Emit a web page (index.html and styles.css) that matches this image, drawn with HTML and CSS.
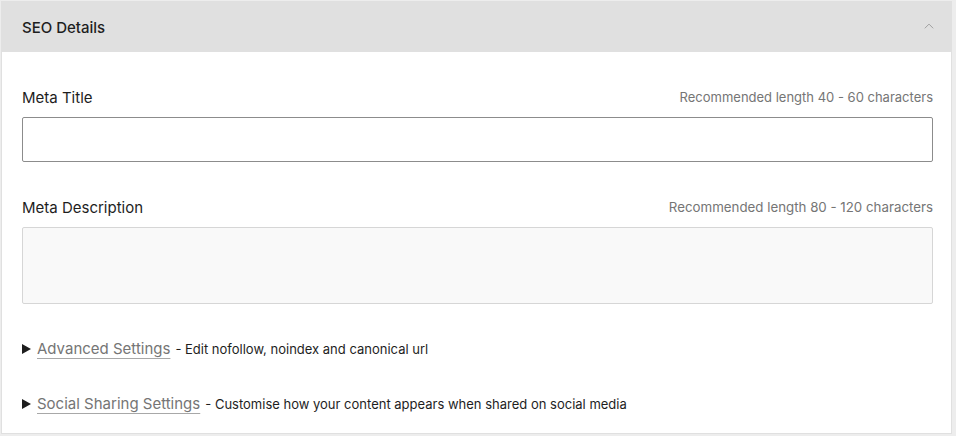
FILE: index.html
```html
<!DOCTYPE html>
<html>
<head>
<meta charset="utf-8">
<link rel="stylesheet" href="styles.css">
</head>
<body>
<section class="panel">
  <header class="panel-head">
    <h2 class="panel-title">SEO Details</h2>
    <svg class="chev" width="10" height="6" viewBox="0 0 10 6"><path d="M0.8 5.3 L5 1.1 L9.2 5.3" fill="none" stroke="#a0a0a0" stroke-width="1"/></svg>
  </header>
  <div class="panel-body">
    <div class="field">
      <div class="field-head">
        <label class="field-label">Meta Title</label>
        <span class="hint">Recommended length 40 - 60 characters</span>
      </div>
      <input class="input" type="text">
    </div>
    <div class="field">
      <div class="field-head">
        <label class="field-label">Meta Description</label>
        <span class="hint">Recommended length 80 - 120 characters</span>
      </div>
      <textarea class="textarea"></textarea>
    </div>
    <div class="toggle">
      <span class="tri"></span>
      <a class="toggle-link">Advanced Settings</a>
      <span class="toggle-desc">- Edit nofollow, noindex and canonical url</span>
    </div>
    <div class="toggle">
      <span class="tri"></span>
      <a class="toggle-link">Social Sharing Settings</a>
      <span class="toggle-desc">- Customise how your content appears when shared on social media</span>
    </div>
  </div>
</section>
</body>
</html>
```

FILE: styles.css
```css
html, body {
  margin: 0;
  padding: 0;
}
body {
  background: #ededed;
  font-family: Inter, "Noto Sans", sans-serif;
  color: #1e1e1e;
  width: 956px;
  height: 436px;
  overflow: hidden;
}
.panel {
  margin: 1px 0 0 1px;
  width: 949px;
  height: 431px;
  border: 1px solid #e0e0e0;
  background: #fff;
  box-sizing: content-box;
}
.panel-head {
  height: 50px;
  background: #e0e0e0;
  display: flex;
  align-items: center;
  justify-content: space-between;
  padding: 0 17px 0 20px;
}
.panel-title {
  margin: 0;
  font-size: 15px;
  font-weight: 500;
  color: #1e1e1e;
}
.chev {
  display: block;
  margin-top: -2px;
}
.panel-body {
  padding: 35px 18px 0 20px;
}
.field {
  margin-bottom: 35px;
}
.field-head {
  display: flex;
  justify-content: space-between;
  align-items: center;
  height: 20px;
  margin-bottom: 10px;
}
.field-label {
  font-size: 15px;
  color: #1e1e1e;
}
.hint {
  font-size: 13px;
  color: #757575;
}
.field:nth-child(2) .hint {
  font-size: 13.3px;
}
.input {
  display: block;
  width: 100%;
  height: 45px;
  box-sizing: border-box;
  border: 1px solid #8c8c8c;
  border-radius: 2px;
  background: #fff;
  margin: 0;
}
.textarea {
  display: block;
  width: 100%;
  height: 77px;
  box-sizing: border-box;
  border: 1px solid #d6d6d6;
  border-radius: 2px;
  background: #f9f9f9;
  margin: 0;
  resize: none;
}
.toggle {
  display: flex;
  align-items: baseline;
  height: 20px;
  margin-bottom: 35px;
}
.tri {
  width: 0;
  height: 0;
  border-left: 9px solid #1e1e1e;
  border-top: 5px solid transparent;
  border-bottom: 5px solid transparent;
  margin-right: 6px;
  align-self: center;
}
.toggle-link {
  font-size: 15px;
  color: #757575;
  text-decoration: underline;
  text-decoration-color: #a8a8a8;
  text-underline-offset: 4px;
  margin-right: 5px;
}
.toggle-desc {
  font-size: 13px;
  color: #1e1e1e;
}
```
